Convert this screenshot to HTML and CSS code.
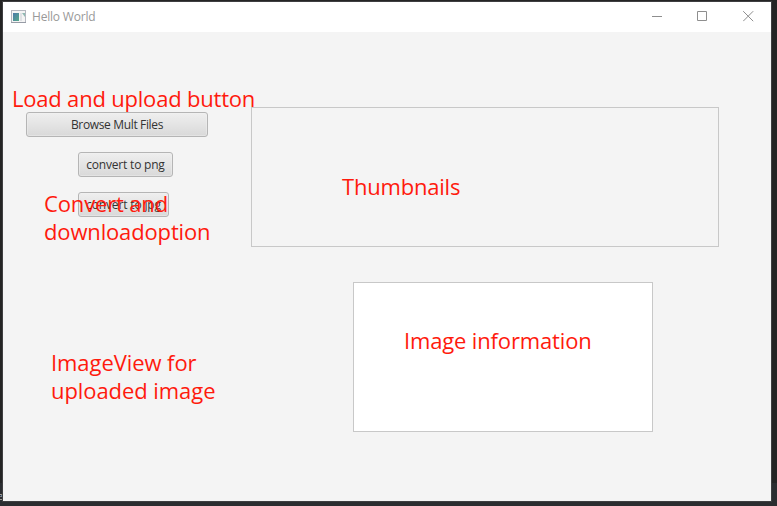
FILE: index.html
```html
<!DOCTYPE html>
<html lang="en">
<head>
<meta charset="utf-8">
<title>Hello World</title>
<link rel="stylesheet" href="styles.css">
</head>
<body>
<div class="desktop">
  <span class="backdrop-text">e</span>
  <main class="window">
    <header class="titlebar">
      <svg class="app-icon" width="16" height="14" viewBox="0 0 16 14">
        <defs>
          <linearGradient id="screen" x1="0" y1="0" x2="1" y2="1">
            <stop offset="0" stop-color="#4b79a8"/>
            <stop offset="1" stop-color="#55a98a"/>
          </linearGradient>
        </defs>
        <rect x=".5" y=".5" width="14" height="12" fill="#f4f4f4" stroke="#b4b7bf"/>
        <path d="M0 12.5h15" stroke="#969ba5"/>
        <rect x="2" y="3" width="6" height="8" fill="url(#screen)"/>
        <rect x="9" y="3" width="2" height="8" fill="#dfe1e4"/>
        <path d="M11 3h3v4z" fill="#8fb9b2"/>
      </svg>
      <h1 class="title">Hello World</h1>
      <div class="controls">
        <svg width="11" height="11" viewBox="0 0 11 11"><path d="M0 5.5h10"/></svg>
        <svg width="11" height="11" viewBox="0 0 11 11"><path d="M.5.5h9v9h-9z"/></svg>
        <svg class="close" width="11" height="11" viewBox="0 0 11 11"><path d="M.2.2l10 10M10.200.2l-10 10"/></svg>
      </div>
    </header>
    <section class="content">
      <div class="actions">
        <button class="button browse">Browse Mult Files</button>
        <button class="button png">convert to png</button>
        <button class="button jpg">convert to jpg</button>
      </div>
      <div class="panels">
        <div class="thumbnails"></div>
        <div class="information"></div>
      </div>
    </section>
  </main>
  <div class="note note-load">Load and upload button</div>
  <div class="note note-convert">Convert and<br>downloadoption</div>
  <div class="note note-view">ImageView for<br>uploaded image</div>
  <div class="note note-thumbs">Thumbnails</div>
  <div class="note note-info">Image information</div>
</div>
</body>
</html>
```
FILE: styles.css
```css
* { box-sizing: border-box; }
body { margin: 0; font-family: "Open Sans", sans-serif; }
.desktop {
  position: relative;
  width: 777px;
  height: 506px;
  padding: 2px 6px 5px 3px;
  overflow: hidden;
  background: linear-gradient(#242424 0 483px, #2b2d30 483px);
}
.backdrop-text {
  position: absolute;
  left: -3px;
  top: 488px;
  font-size: 11px;
  line-height: 15px;
  color: #b5b5b5;
}
.window {
  position: relative;
  display: flex;
  flex-direction: column;
  width: 768px;
  height: 499px;
  background: #f4f4f4;
  box-shadow: 0 0 0 1px #3e3e40;
}
.titlebar {
  display: flex;
  align-items: center;
  height: 30px;
  padding: 0 17px 0 8px;
  background: #fff;
}
.app-icon { flex: none; }
.title {
  margin: 0 0 0 5px;
  font-size: 12px;
  font-weight: 400;
  line-height: 16px;
  letter-spacing: -.2px;
  color: #999;
}
.controls {
  display: flex;
  gap: 34px;
  margin: -1px 0 0 auto;
}
.controls svg { fill: none; stroke: #8e8e8e; }
.close { margin-left: 1px; }
.content { display: flex; flex: 1; }
.actions {
  display: flex;
  flex-direction: column;
  align-items: flex-start;
  gap: 15px;
  width: 248px;
  padding: 80px 0 0 23px;
}
.button {
  height: 25px;
  margin: 0 0 0 52px;
  padding: 0;
  border: 1px solid #b5b5b5;
  border-radius: 3px;
  background: linear-gradient(#efefef, #d9d9d9);
  box-shadow: inset 0 0 0 1px #f3f3f366;
  font: 12px/22px "Open Sans", sans-serif;
  letter-spacing: -.35px;
  color: #333;
}
.browse { width: 182px; margin-left: 0; }
.png { width: 95px; letter-spacing: -.2px; }
.jpg { width: 91px; letter-spacing: -.15px; }
.panels { padding-top: 75px; }
.thumbnails {
  width: 468px;
  height: 140px;
  border: 1px solid #c8c8c8;
}
.information {
  width: 300px;
  height: 150px;
  margin: 35px 0 0 102px;
  border: 1px solid #c8c8c8;
  background: #fff;
}
.note {
  position: absolute;
  font-size: 22px;
  line-height: 28px;
  white-space: nowrap;
  color: #ff1a0d;
}
.note-load { left: 12px; top: 84px; letter-spacing: -.2px; }
.note-convert { left: 44px; top: 189px; letter-spacing: -.15px; }
.note-view { left: 51px; top: 348px; letter-spacing: -.07px; }
.note-thumbs { left: 342px; top: 172px; letter-spacing: -.2px; }
.note-info { left: 404px; top: 326px; letter-spacing: -.15px; }
```
